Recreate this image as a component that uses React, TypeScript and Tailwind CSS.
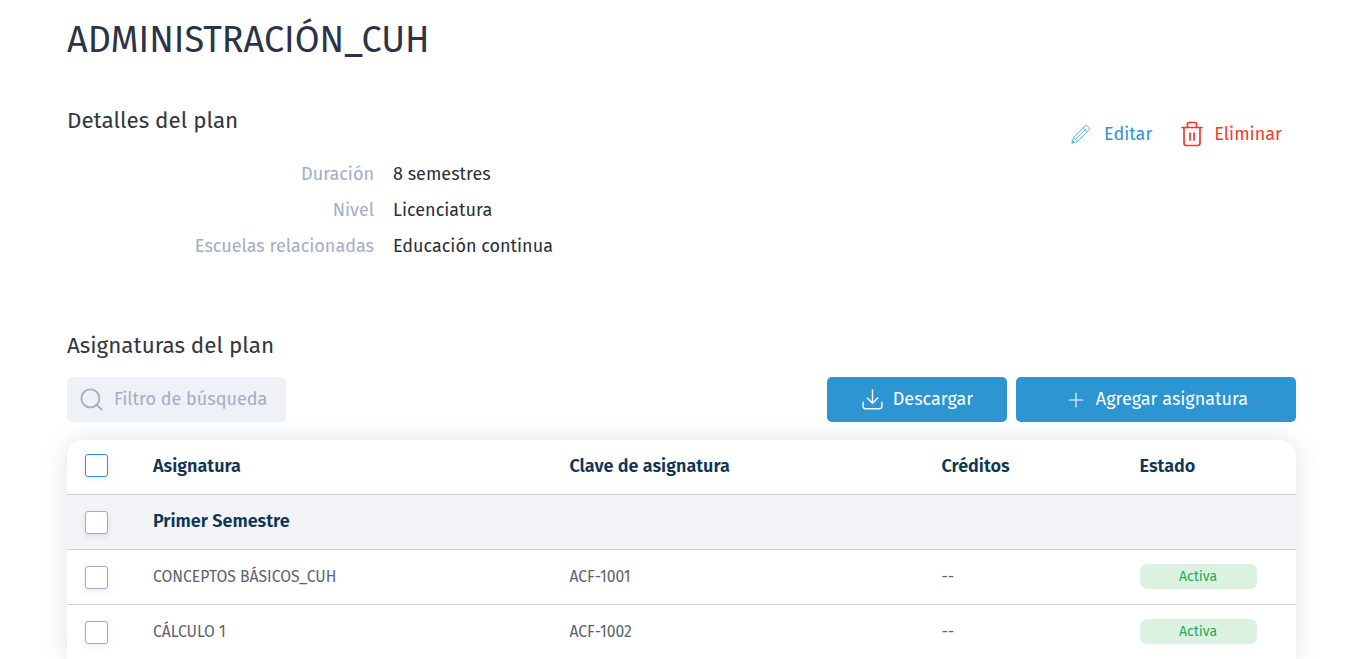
import { Plus, Search } from 'lucide-react';

function Check({ active }: { active?: boolean }) {
  return (
    <span
      className={`block w-[23px] h-[23px] rounded-[3px] border bg-white shadow-[0_2px_6px_rgba(60,80,120,0.12)] ${
        active ? 'border-[#2e95d3] -translate-y-px' : 'border-[#9fadc4]'
      }`}
    />
  );
}

function PencilIcon() {
  return (
    <svg viewBox="0 0 20 20" className="w-5 h-5 opacity-70" fill="none" stroke="currentColor" strokeWidth="1" strokeLinejoin="round" strokeLinecap="round">
      <path d="M1.2 18.8 L2.6 13.4 L13.8 2.2 Q15 1 16.2 1.8 L18 3.6 Q19 5 17.8 6.2 L6.6 17.4 Z" />
      <path d="M2.6 13.4 L6.6 17.4 M12.2 3.8 L16.2 7.8 M4.4 15.4 L14.4 5.4" />
      <path d="M1.2 18.8 L3.4 18.2 L1.8 16.6 Z" fill="currentColor" />
    </svg>
  );
}

function TrashIcon() {
  return (
    <svg viewBox="0 0 22 26" className="w-[22px] h-[26px]" fill="none" stroke="currentColor" strokeWidth="1.7" strokeLinecap="round" strokeLinejoin="round">
      <path d="M1 6.5 H21" />
      <path d="M6.5 6.5 V3 Q6.5 1.5 8 1.5 H14 Q15.5 1.5 15.5 3 V6.5" />
      <path d="M3 6.5 V22 Q3 24.5 5.5 24.5 H16.5 Q19 24.5 19 22 V6.5" />
      <path d="M9 12 V19 M13 12 V19" />
    </svg>
  );
}

function DownloadIcon() {
  return (
    <svg viewBox="0 0 20 20" className="w-[21px] h-[21px]" fill="none" stroke="currentColor" strokeWidth="1.3" strokeLinecap="round" strokeLinejoin="round">
      <path d="M10 1 V13.5 M5 8.5 L10 13.5 L15 8.5" />
      <path d="M1 12.5 V16.5 Q1 18.8 3.3 18.8 H16.7 Q19 18.8 19 16.5 V12.5" />
    </svg>
  );
}

const rows = [
  { name: 'CONCEPTOS BÁSICOS_CUH', code: 'ACF-1001' },
  { name: 'CÁLCULO 1', code: 'ACF-1002' },
];

export default function App() {
  return (
    <div className="h-[659px] overflow-hidden bg-white font-['Fira_Sans','Open_Sans','Noto_Sans',sans-serif] pl-[67px] pr-[51px] text-[#2b2f38]">
      <h1 className="pt-[16px] text-[36px] leading-[48px] text-[#2c3346]">ADMINISTRACIÓN_CUH</h1>
      <div className="mt-[41px] flex justify-between pr-[14px]">
        <div>
          <h2 className="pt-px text-[22.4px] leading-[30px] text-[#33363d]">Detalles del plan</h2>
          <dl className="mt-[20px] grid grid-cols-[307px_auto] gap-x-[19px] text-[18px] leading-[36px]">
            <dt className="text-right text-[#a3aec4]">Duración</dt>
            <dd>8 semestres</dd>
            <dt className="text-right text-[#a3aec4]">Nivel</dt>
            <dd>Licenciatura</dd>
            <dt className="text-right text-[#a3aec4]">Escuelas relacionadas</dt>
            <dd>Educación continua</dd>
          </dl>
        </div>
        <div className="mt-[14px] flex h-[30px] items-center gap-[29px] text-[18px]">
          <span className="flex items-center gap-[13px] text-[#2e95d3]">
            <PencilIcon />
            Editar
          </span>
          <span className="flex items-center gap-[11px] text-[#f23b2e]">
            <TrashIcon />
            Eliminar
          </span>
        </div>
      </div>
      <h2 className="mt-[67px] text-[22.4px] leading-[30px] text-[#33363d]">Asignaturas del plan</h2>
      <div className="mt-[16px] flex items-center">
        <div className="flex h-[45px] w-[219px] items-center gap-[9px] rounded-[5px] bg-[#eef1f6] pl-[11px] text-[18px] text-[#a3aec4]">
          <Search className="w-[27px] h-[27px]" strokeWidth={1.7} />
          Filtro de búsqueda
        </div>
        <button className="ml-auto flex h-[45px] w-[180px] items-center justify-center gap-[10px] rounded-[5px] bg-[#2e95d3] pl-px text-[18px] text-white">
          <DownloadIcon />
          Descargar
        </button>
        <button className="ml-[9px] flex h-[45px] w-[280px] items-center justify-center gap-[8px] rounded-[5px] bg-[#2e95d3] text-[18px] text-white">
          <Plus className="w-[24px] h-[24px]" strokeWidth={1.1} />
          Agregar asignatura
        </button>
      </div>
      <div className="mt-[18px] rounded-t-[16px] bg-white shadow-[0_0_24px_rgba(60,80,120,0.16)]">
        <div className="grid h-[55px] grid-cols-[86px_416.5px_372px_198px_1fr] items-center border-b border-[#c9d3de] pb-px text-[18px] font-semibold text-[#0f3557]">
          <div className="pl-[18px]"><Check active /></div>
          <div>Asignatura</div>
          <div>Clave de asignatura</div>
          <div>Créditos</div>
          <div>Estado</div>
        </div>
        <div className="grid h-[55px] grid-cols-[86px_1fr] items-center border-b border-[#c9d3de] bg-[#f3f4f7] text-[18px] font-semibold text-[#0f3557]">
          <div className="pl-[18px]"><Check /></div>
          <div className="-translate-y-px">Primer Semestre</div>
        </div>
        {rows.map((r) => (
          <div key={r.code} className="grid h-[55px] grid-cols-[86px_416.5px_372px_198px_1fr] items-center border-b border-[#c9d3de] text-[15.7px] text-[#5b6270]">
            <div className="pl-[18px]"><Check /></div>
            <div>{r.name}</div>
            <div>{r.code}</div>
            <div>--</div>
            <div>
              <span className="flex h-[25px] w-[117px] -translate-y-px items-center justify-center rounded-[7px] bg-[#dbf2e1] text-[14px] text-[#27a857]">Activa</span>
            </div>
          </div>
        ))}
      </div>
    </div>
  );
}
